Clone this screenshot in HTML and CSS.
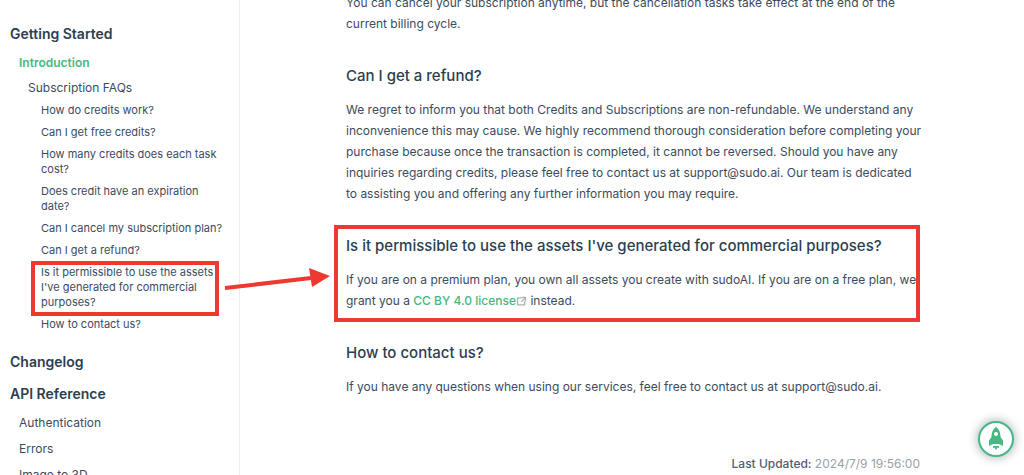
FILE: index.html
```html
<!DOCTYPE html>
<html lang="en">
<head>
    <meta charset="UTF-8">
    <meta name="viewport" content="width=device-width, initial-scale=1.0">
    <title>Subscription FAQs</title>
    <link rel="stylesheet" href="styles.css">
</head>
<body>
    <div class="layout">
        <nav class="sidebar">
            <a class="group" href="#">Getting Started</a>
            <a class="page active" href="#">Introduction</a>
            <a class="section" href="#">Subscription FAQs</a>
            <ul class="questions">
                <li><a href="#credits">How do credits work?</a></li>
                <li><a href="#free">Can I get free credits?</a></li>
                <li><a href="#many">How many credits does each task cost?</a></li>
                <li><a href="#expire">Does credit have an expiration date?</a></li>
                <li><a href="#cancel">Can I cancel my subscription plan?</a></li>
                <li><a href="#refund">Can I get a refund?</a></li>
                <li class="marked">
                    <a href="#commercial">Is it permissible to use the assets I've generated for commercial purposes?</a>
                    <svg class="arrow" width="106" height="24" viewBox="0 0 106 24">
                        <path d="M0 20 86 10" stroke="#ee3930" stroke-width="4" fill="none"/>
                        <path d="M84 0 105 8 87 19Z" fill="#ee3930"/>
                    </svg>
                </li>
                <li><a href="#contact">How to contact us?</a></li>
            </ul>
            <a class="group" href="#">Changelog</a>
            <a class="group" href="#">API Reference</a>
            <a class="page" href="#">Authentication</a>
            <a class="page" href="#">Errors</a>
            <a class="page" href="#">Image to 3D</a>
        </nav>

        <main class="main">
            <article class="content">
                <p>You can cancel your subscription anytime, but the cancellation tasks take effect at the end of the current billing cycle.</p>

                <section>
                    <h3 id="refund">Can I get a refund?</h3>
                    <p>We regret to inform you that both Credits and Subscriptions are non-refundable. We understand any inconvenience this may cause. We highly recommend thorough consideration before completing your purchase because once the transaction is completed, it cannot be reversed. Should you have any inquiries regarding credits, please feel free to contact us at support@sudo.ai. Our team is dedicated to assisting you and offering any further information you may require.</p>
                </section>

                <section class="marked">
                    <h3 id="commercial">Is it permissible to use the assets I've generated for commercial purposes?</h3>
                    <p>If you are on a premium plan, you own all assets you create with sudoAI. If you are on a free plan, we grant you a <a class="link" href="#">CC BY 4.0 license</a><svg class="external" width="11" height="11" viewBox="0 0 100 100"><path fill="currentColor" stroke="currentColor" stroke-width="3" d="M18.800 85.100h56a8 8 0 0 0 8-8v-32h-8v32h-56v-56h32v-8h-32a8 8 0 0 0-8 8v56a8 8 0 0 0 8 8zM45.700 48.700l5.700 5.600L82.800 22.900v19.700h8V9.200H57.400v8h19.800z"/></svg> instead.</p>
                </section>

                <section>
                    <h3 id="contact">How to contact us?</h3>
                    <p>If you have any questions when using our services, feel free to contact us at support@sudo.ai.</p>
                </section>

                <footer class="updated"><span>Last Updated:</span> <time>2024/7/9 19:56:00</time></footer>
            </article>
        </main>
    </div>

    <button class="to-top" type="button" aria-label="Back to top">
        <svg width="18" height="24" viewBox="0 0 18 24" fill="#46b882">
            <path fill-rule="evenodd" d="M9 0C5.500 2.500 4.500 6 4.500 10L2 13.500V19l4-2h6l4 2v-5.500L13.500 10C13.500 6 12.500 2.500 9 0ZM9 5a2 2 0 1 1 0 4 2 2 0 0 1 0-4Z"/>
            <path d="M6 19h6v2l-1.500-.5L9 23l-1.500-2.500L6 21Z"/>
        </svg>
    </button>
</body>
</html>
```
FILE: styles.css
```css
* {
    box-sizing: border-box;
}

body {
    margin: 0;
    background: #fff;
    color: #3b4b5e;
    font-family: Inter, "Liberation Sans", sans-serif;
    font-size: 12px;
    line-height: 21px;
}

a {
    color: inherit;
    text-decoration: none;
}

.layout {
    display: flex;
    height: 100vh;
    overflow: hidden;
}

/* Sidebar */
.sidebar {
    display: flex;
    flex-direction: column;
    flex: none;
    width: 240px;
    padding: 23px 16px 0 10px;
    border-right: 1px solid #eaecef;
}

.group {
    flex: none;
    margin-bottom: 11px;
    color: #2c3e50;
    font-size: 14px;
    font-weight: 600;
}

.page {
    flex: none;
    margin-bottom: 5px;
    padding-left: 9px;
}

.group + .page {
    margin-top: -3px;
}

.active {
    color: #46b882;
    font-weight: 600;
}

.section {
    padding-left: 18px;
    line-height: 19px;
}

.questions {
    display: flex;
    flex-direction: column;
    gap: 7px;
    margin: 6px 0 19px;
    padding-left: 31px;
    list-style: none;
    font-size: 11px;
    line-height: 15px;
}

/* Red annotations */
.marked {
    position: relative;
}

.marked::before {
    content: "";
    position: absolute;
    inset: -9px 2px -11px -12px;
    border: 4px solid #ee3930;
    pointer-events: none;
}

.questions .marked::before {
    inset: -4px 4px -6px -10px;
}

.arrow {
    position: absolute;
    top: 3px;
    left: 184px;
}

/* Content */
.main {
    flex: 1;
    min-width: 0;
    padding-left: 4px;
}

.content {
    max-width: 576px;
    margin: -8px auto 0;
}

.content p {
    margin: 0;
}

.content section {
    margin-top: 30px;
}

.content h3 {
    margin: 0 0 11px;
    color: #2c3e50;
    font-size: 15px;
    font-weight: 500;
    line-height: 24px;
}

.link {
    color: #46b882;
    font-weight: 500;
}

.external {
    color: #aaa;
    vertical-align: -2px;
}

.updated {
    margin-top: 56px;
    padding-right: 2px;
    color: #9a9fa8;
    text-align: right;
}

.updated span {
    color: #4e5e70;
    font-weight: 500;
}

.to-top {
    position: fixed;
    right: 10px;
    bottom: 18px;
    display: flex;
    align-items: center;
    justify-content: center;
    width: 36px;
    height: 36px;
    padding: 0;
    border: 2px solid #46b882;
    border-radius: 50%;
    background: #fff;
    box-shadow: 0 0 8px 2px rgba(44, 62, 80, 0.3);
}
```
